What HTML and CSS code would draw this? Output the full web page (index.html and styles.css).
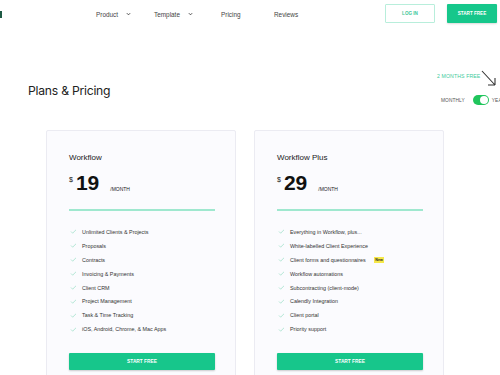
FILE: index.html
```html
<!DOCTYPE html>
<html lang="en">
<head>
<meta charset="utf-8">
<title>Plans &amp; Pricing</title>
<link rel="stylesheet" href="styles.css">
</head>
<body>
<header class="topbar">
  <span class="logo"></span>
  <nav class="nav">
    <a class="nav-item">Product <svg class="chev" viewBox="0 0 6 4"><path d="M1 1l2 2 2-2" fill="none" stroke="#333" stroke-width="1"/></svg></a>
    <a class="nav-item">Template <svg class="chev" viewBox="0 0 6 4"><path d="M1 1l2 2 2-2" fill="none" stroke="#333" stroke-width="1"/></svg></a>
    <a class="nav-item">Pricing</a>
    <a class="nav-item">Reviews</a>
  </nav>
  <div class="actions">
    <a class="btn btn-outline">LOG IN</a>
    <a class="btn btn-solid">START FREE</a>
  </div>
</header>

<main class="pricing">
  <div class="pricing-head">
    <h1 class="title">Plans &amp; Pricing</h1>
    <div class="offer">
      <div class="offer-top">
        <span class="free">2 MONTHS FREE</span>
        <svg class="arrow" viewBox="0 0 16 18"><path d="M1 1L14 15M14 15V8M14 15H7" fill="none" stroke="#333" stroke-width="1.1"/></svg>
      </div>
      <div class="switch-row">
        <span class="period">MONTHLY</span>
        <span class="toggle"><span class="knob"></span></span>
        <span class="period">YEARLY</span>
      </div>
    </div>
  </div>

  <div class="cards">
    <section class="card">
      <h2 class="plan">Workflow</h2>
      <div class="price"><span class="cur">$</span><span class="amount">19</span><span class="per">/MONTH</span></div>
      <div class="rule"></div>
      <ul class="features">
        <li><svg class="check" viewBox="0 0 8 6"><path d="M1 3l2 2 4-4" fill="none" stroke="#8fdcbf" stroke-width="0.8"/></svg>Unlimited Clients &amp; Projects</li>
        <li><svg class="check" viewBox="0 0 8 6"><path d="M1 3l2 2 4-4" fill="none" stroke="#8fdcbf" stroke-width="0.8"/></svg>Proposals</li>
        <li><svg class="check" viewBox="0 0 8 6"><path d="M1 3l2 2 4-4" fill="none" stroke="#8fdcbf" stroke-width="0.8"/></svg>Contracts</li>
        <li><svg class="check" viewBox="0 0 8 6"><path d="M1 3l2 2 4-4" fill="none" stroke="#8fdcbf" stroke-width="0.8"/></svg>Invoicing &amp; Payments</li>
        <li><svg class="check" viewBox="0 0 8 6"><path d="M1 3l2 2 4-4" fill="none" stroke="#8fdcbf" stroke-width="0.8"/></svg>Client CRM</li>
        <li><svg class="check" viewBox="0 0 8 6"><path d="M1 3l2 2 4-4" fill="none" stroke="#8fdcbf" stroke-width="0.8"/></svg>Project Management</li>
        <li><svg class="check" viewBox="0 0 8 6"><path d="M1 3l2 2 4-4" fill="none" stroke="#8fdcbf" stroke-width="0.8"/></svg>Task &amp; Time Tracking</li>
        <li><svg class="check" viewBox="0 0 8 6"><path d="M1 3l2 2 4-4" fill="none" stroke="#8fdcbf" stroke-width="0.8"/></svg>iOS, Android, Chrome, &amp; Mac Apps</li>
      </ul>
      <a class="card-btn">START FREE</a>
    </section>

    <section class="card">
      <h2 class="plan">Workflow Plus</h2>
      <div class="price"><span class="cur">$</span><span class="amount">29</span><span class="per">/MONTH</span></div>
      <div class="rule"></div>
      <ul class="features">
        <li><svg class="check" viewBox="0 0 8 6"><path d="M1 3l2 2 4-4" fill="none" stroke="#8fdcbf" stroke-width="0.8"/></svg>Everything in Workflow, plus...</li>
        <li><svg class="check" viewBox="0 0 8 6"><path d="M1 3l2 2 4-4" fill="none" stroke="#8fdcbf" stroke-width="0.8"/></svg>White-labelled Client Experience</li>
        <li><svg class="check" viewBox="0 0 8 6"><path d="M1 3l2 2 4-4" fill="none" stroke="#8fdcbf" stroke-width="0.8"/></svg>Client forms and questionnaires<span class="badge">New</span></li>
        <li><svg class="check" viewBox="0 0 8 6"><path d="M1 3l2 2 4-4" fill="none" stroke="#8fdcbf" stroke-width="0.8"/></svg>Workflow automations</li>
        <li><svg class="check" viewBox="0 0 8 6"><path d="M1 3l2 2 4-4" fill="none" stroke="#8fdcbf" stroke-width="0.8"/></svg>Subcontracting (client-mode)</li>
        <li><svg class="check" viewBox="0 0 8 6"><path d="M1 3l2 2 4-4" fill="none" stroke="#8fdcbf" stroke-width="0.8"/></svg>Calendly Integration</li>
        <li><svg class="check" viewBox="0 0 8 6"><path d="M1 3l2 2 4-4" fill="none" stroke="#8fdcbf" stroke-width="0.8"/></svg>Client portal</li>
        <li><svg class="check" viewBox="0 0 8 6"><path d="M1 3l2 2 4-4" fill="none" stroke="#8fdcbf" stroke-width="0.8"/></svg>Priority support</li>
      </ul>
      <a class="card-btn">START FREE</a>
    </section>
  </div>
</main>
</body>
</html>
```

FILE: styles.css
```css
* { box-sizing: border-box; }
html, body { margin: 0; padding: 0; }
body {
  width: 500px;
  height: 375px;
  overflow: hidden;
  background: #ffffff;
  font-family: "Liberation Sans", Arial, sans-serif;
  color: #333;
}

.topbar {
  display: flex;
  align-items: center;
  height: 26px;
}
.logo {
  display: block;
  width: 2px;
  height: 7px;
  background: #1e5a44;
  margin-top: 2px;
}
.nav {
  display: grid;
  grid-template-columns: 58px 67px 53px 60px;
  margin-left: 94px;
  margin-top: 2px;
  font-size: 6.4px;
  color: #444;
}
.nav-item {
  display: flex;
  align-items: center;
  gap: 8px;
}
.chev { width: 5px; height: 4px; }

.actions {
  margin-left: auto;
  margin-right: 3px;
  display: flex;
  gap: 12px;
}
.btn {
  display: flex;
  align-items: center;
  justify-content: center;
  width: 50px;
  height: 19px;
  font-size: 4.6px;
  font-weight: bold;
  border-radius: 1px;
}
.btn-outline {
  border: 1px solid #b8eedb;
  color: #3fc699;
}
.btn-solid {
  background: #16c78b;
  color: #fff;
  box-shadow: 0 1px 2px rgba(0,0,0,0.15);
}

.pricing { padding-left: 28px; }
.pricing-head {
  display: flex;
  margin-top: 44px;
  height: 60px;
}
.title {
  flex: none;
  width: 409px;
  margin: 13px 0 0;
  font-family: Inter, sans-serif;
  font-weight: 400;
  font-size: 12.2px;
  color: #222;
  letter-spacing: -0.25px;
}
.offer {
  flex: none;
  width: 90px;
}
.offer-top {
  display: flex;
  align-items: flex-start;
}
.free {
  margin-top: 3px;
  font-size: 5.2px;
  color: #3fcb9c;
  letter-spacing: 0.1px;
}
.arrow {
  width: 16px;
  height: 18px;
  margin-left: 1px;
}
.switch-row {
  display: flex;
  align-items: center;
  margin-top: 7px;
  margin-left: 4px;
}
.period {
  font-size: 4.8px;
  color: #555;
  letter-spacing: 0.1px;
}
.toggle {
  display: flex;
  justify-content: flex-end;
  align-items: center;
  width: 16px;
  height: 10px;
  margin: 0 3px 0 8px;
  background: #20c55c;
  border-radius: 5px;
  padding: 1px;
}
.knob {
  width: 8px;
  height: 8px;
  background: #fff;
  border-radius: 50%;
}

.cards {
  display: flex;
  gap: 18px;
  margin-left: 18px;
}
.card {
  flex: none;
  width: 190px;
  height: 260px;
  background: #fbfbfe;
  border: 1px solid #ebebf2;
  border-radius: 2px;
  padding: 22px 21px 0 22px;
}
.plan {
  margin: 0;
  font-size: 8px;
  font-weight: 400;
  color: #222;
}
.price {
  display: flex;
  align-items: flex-start;
  margin-top: 12px;
  height: 20px;
}
.cur {
  font-size: 7px;
  margin-top: 2px;
  color: #111;
}
.amount {
  font-size: 21px;
  font-weight: bold;
  line-height: 18px;
  color: #111;
  margin-left: 3px;
}
.per {
  font-size: 5px;
  margin-top: 12px;
  margin-left: 11px;
  color: #222;
}
.rule {
  height: 2px;
  background: #9fe8cf;
  margin-top: 15px;
  width: 146px;
}
.features {
  list-style: none;
  margin: 14px 0 0;
  padding: 0;
  font-size: 5.4px;
  color: #333;
}
.features li {
  display: flex;
  align-items: center;
  height: 13.9px;
}
.check {
  width: 7px;
  height: 5px;
  margin: 0 5px 0 1px;
}
.badge {
  background: #f6e84a;
  font-size: 3.6px;
  font-weight: bold;
  padding: 1px 1.5px;
  margin-left: 8px;
  color: #222;
}
.card-btn {
  display: flex;
  align-items: center;
  justify-content: center;
  width: 146px;
  height: 17px;
  margin-top: 17px;
  background: #17c68b;
  color: #fff;
  font-size: 4.8px;
  font-weight: bold;
  border-radius: 1px;
  box-shadow: 0 1px 2px rgba(0,0,0,0.2);
}
```
